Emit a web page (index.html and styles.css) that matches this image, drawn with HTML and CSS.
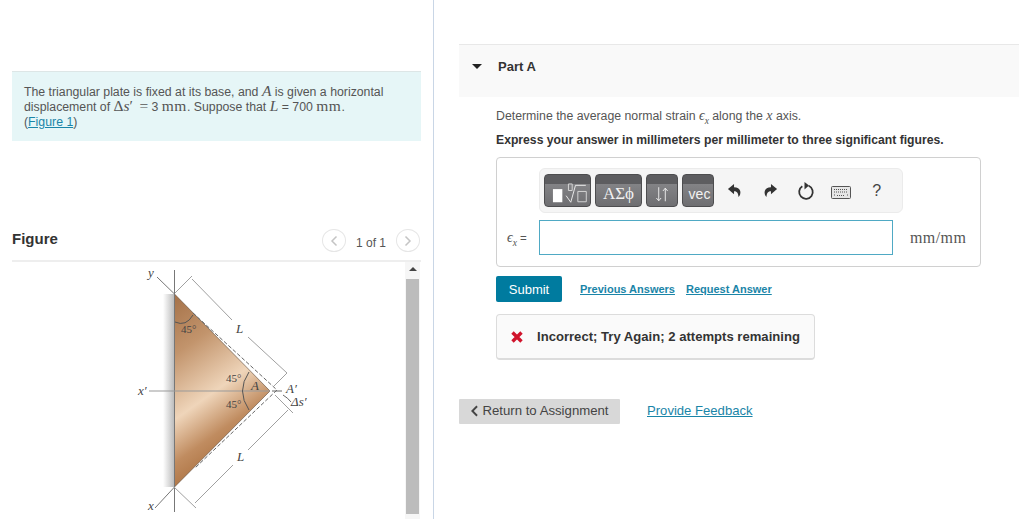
FILE: index.html
```html
<!DOCTYPE html>
<html lang="en">
<head>
<meta charset="utf-8">
<title>Part A</title>
<link rel="stylesheet" href="styles.css">
</head>
<body>
<main class="page">
  <section class="left">
    <div class="intro">The triangular plate is fixed at its base, and <span class="mi big">A</span> is given a horizontal<br>displacement of <span class="mn big">Δ</span><span class="mi big">s</span><span class="mn big">′</span> <span class="mn big eq">=</span> 3 <span class="mn big unit">mm</span>. Suppose that <span class="mi big">L</span> = 700 <span class="mn big unit">mm</span>.<br>(<a href="#" class="link">Figure 1</a>)</div>
    <header class="fig-head">
      <h2 class="fig-title">Figure</h2>
      <div class="pager">
        <span class="pager-btn"><svg class="chev" viewBox="0 0 10 12"><path d="M7.500 1.500 3 6l4.500 4.500"/></svg></span>
        <span class="pager-text">1 of 1</span>
        <span class="pager-btn"><svg class="chev" viewBox="0 0 10 12"><path d="M2.500 1.500 7 6l-4.500 4.500"/></svg></span>
      </div>
    </header>
    <div class="fig-body">
      <svg class="diagram" viewBox="12 262 393 257">
        <defs>
          <linearGradient id="plate" x1="0.1" y1="0" x2="0.45" y2="1">
            <stop offset="0" stop-color="#a8754c"/>
            <stop offset="0.25" stop-color="#c2946c"/>
            <stop offset="0.55" stop-color="#efd5ba"/>
            <stop offset="0.75" stop-color="#c08c60"/>
            <stop offset="1" stop-color="#a0622f"/>
          </linearGradient>
          <linearGradient id="wall" x1="0" y1="0" x2="1" y2="0">
            <stop offset="0" stop-color="#fff"/>
            <stop offset="1" stop-color="#bcbcbc"/>
          </linearGradient>
        </defs>
        <rect x="163" y="294" width="11" height="193" fill="url(#wall)"/>
        <path d="M174.500 294 270 391 174.500 487z" fill="url(#plate)" stroke="#5b4636" stroke-width=".6"/>
        <g fill="none" stroke-width="1">
          <path d="M174.500 270V512" stroke="#777"/>
          <path d="M157 277 174.500 294M155 508 174.500 487" stroke="#777"/>
          <path d="M149 391H270" stroke="#999"/>
          <path d="M175 293 192 276M192 279 232 320M248 337 287 373M287 373 274 386" stroke="#a0a0a0"/>
          <path d="M174 487 196 508M195 503 233 465M248 450 288 410M275 395 293 413" stroke="#a0a0a0"/>
          <path d="M193 313 277 390 195 468" stroke="#666" stroke-dasharray="4 2"/>
          <path d="M175 322Q186 327 193 315M249 372Q236 391 249 410" stroke="#555"/>
          <path d="M272 391H282M283 395Q288 398 291 402" stroke="#666"/>
        </g>
        <g class="fig-label">
          <text x="148" y="277">y</text>
          <text x="138" y="395">x′</text>
          <text x="148" y="510">x</text>
          <text x="236" y="333">L</text>
          <text x="237" y="461">L</text>
          <text x="251" y="390">A</text>
          <text x="286" y="393">A′</text>
          <text x="291" y="406">Δs′</text>
        </g>
        <g class="fig-num">
          <text x="181" y="333">45°</text>
          <text x="226" y="382">45°</text>
          <text x="226" y="408">45°</text>
        </g>
      </svg>
      <div class="scrollbar">
        <span class="scroll-up"></span>
        <span class="scroll-thumb"></span>
      </div>
    </div>
  </section>

  <section class="right">
    <header class="part-head">
      <span class="caret"></span>
      <h3 class="part-title">Part A</h3>
    </header>
    <div class="part-body">
      <p class="prompt">Determine the average normal strain <span class="mi mth">ϵ<sub>x</sub></span> along the <span class="mi mth">x</span> axis.</p>
      <p class="instr">Express your answer in millimeters per millimeter to three significant figures.</p>
      <div class="answer">
        <div class="toolbar">
          <span class="tool tool-a">
            <svg class="tool-svg" viewBox="0 0 47 33"><rect x="8" y="15" width="10" height="14" fill="#fff"/><path d="M24.500 9.500h4v7h-4zM34.500 17.500h9v11h-9z" fill="none" stroke="#d8d8d8"/><path d="M22 22l5 7 5-18h11" fill="none" stroke="#eee"/></svg>
          </span>
          <span class="tool tool-b">ΑΣϕ</span>
          <span class="tool tool-c">
            <svg class="tool-svg" viewBox="0 0 32 33"><path d="M12.500 13v14M10 24.500l2.500 3 2.500-3M19.500 28V14M17 17l2.500-3 2.500 3" fill="none" stroke="#eee"/></svg>
          </span>
          <span class="tool tool-d">vec</span>
          <span class="icons">
            <svg class="icon" viewBox="0 0 16 16"><path d="M7.500 1 1 6.500l6.500 5.500V8.800c3 0 4.400 1.500 4.800 6.200 1.700-2 2.400-4.200 1.800-6.500C13.500 6 11 4.500 7.500 4.400z" fill="#333"/></svg>
            <svg class="icon" viewBox="0 0 16 16"><path d="M8.500 1 15 6.500 8.500 12V8.800c-3 0-4.400 1.500-4.800 6.200C2 13 1.300 10.800 1.900 8.500 2.500 6 5 4.500 8.500 4.400z" fill="#333"/></svg>
            <svg class="icon icon-reload" viewBox="0 0 18 18"><path d="M5.300 4.300a6.800 6.800 0 1 0 6.400-.5" fill="none" stroke="#333" stroke-width="1.800"/><path d="M7.500 0v7.500L12 3.500z" fill="#333"/></svg>
            <svg class="icon icon-key" viewBox="0 0 20 13"><rect x=".5" y=".5" width="19" height="12" rx="1" fill="#e6e6e6" stroke="#555"/><path d="M3 3.500h14M3 6h14M3 9h1M6 9.500h8M16 9h1" stroke="#555" stroke-dasharray="1 1"/></svg>
            <span class="help">?</span>
          </span>
        </div>
        <div class="eq-row">
          <span class="eq-label"><span class="mi mth">ϵ<sub>x</sub></span> =</span>
          <input class="eq-input" type="text" aria-label="answer">
          <span class="eq-unit">mm/mm</span>
        </div>
      </div>
      <div class="actions">
        <button class="submit" type="button">Submit</button>
        <a href="#" class="link small">Previous Answers</a>
        <a href="#" class="link small">Request Answer</a>
      </div>
      <div class="feedback">
        <svg class="cross" viewBox="0 0 14 14"><path d="M2.500 2.500 11.500 11.500M11.500 2.500 2.500 11.500" stroke="#d0142c" stroke-width="3.400"/></svg>
        <span>Incorrect; Try Again; 2 attempts remaining</span>
      </div>
    </div>
    <footer class="foot">
      <button class="return" type="button"><svg class="ret-chev" viewBox="0 0 10 14"><path d="M8 1.500 2.500 7 8 12.500" /></svg>Return to Assignment</button>
      <a href="#" class="link feedback-link">Provide Feedback</a>
    </footer>
  </section>
</main>
</body>
</html>
```
FILE: styles.css
```css
* { box-sizing: border-box; }
html, body { margin: 0; height: 100%; overflow: hidden; background: #fff; }
body { font-family: "Liberation Sans", Arial, sans-serif; color: #333; }
.page { display: flex; width: 1019px; height: 519px; }

.mi { font-family: "Liberation Serif", serif; font-style: italic; }
.mn { font-family: "Liberation Serif", serif; }
.big { font-size: 15.500px; line-height: 0; }
.unit { letter-spacing: .5px; }
.eq { margin-left: 3px; }
.mth { font-size: 14px; line-height: 0; }
.mi sub { font-size: 9.500px; line-height: 0; }
.link { color: #1a85a8; text-decoration: underline; }

.left { width: 434px; height: 519px; flex: none; padding: 71px 12px 0; border-right: 1px solid #c9d6e6; display: flex; flex-direction: column; }
.intro { width: 409px; height: 70px; padding: 13px 12px 0; background: #e6f6f7; border-top: 1px solid #dde6e6; font-size: 12.300px; line-height: 15px; color: #555; white-space: nowrap; }
.fig-head { width: 409px; height: 51px; margin-top: 70px; padding: 20px 1px 0 0; display: flex; justify-content: space-between; align-items: flex-start; border-bottom: 2px solid #eee; }
.fig-title { margin: 0; font-size: 15px; line-height: 16px; font-weight: bold; color: #333; }
.pager { display: flex; align-items: center; gap: 10px; margin-top: -2px; }
.pager-btn { width: 24px; height: 23px; border: 1px solid #e6e6e6; border-radius: 50%; display: flex; align-items: center; justify-content: center; }
.chev { width: 10px; height: 12px; fill: none; stroke: #c4c4c4; stroke-width: 1.500; }
.pager-text { font-size: 12px; color: #555; padding-top: 4px; }
.fig-body { display: flex; width: 409px; flex: 1; min-height: 0; }
.diagram { width: 393px; height: 257px; flex: none; }
.fig-label text { font-family: "Liberation Serif", serif; font-style: italic; font-size: 13px; fill: #444; }
.fig-num text { font-family: "Liberation Serif", serif; font-size: 11px; fill: #444; }
.scrollbar { width: 15px; display: flex; flex-direction: column; align-items: center; background: #f6f6f6; }
.scroll-up { margin-top: 5px; width: 0; height: 0; border-left: 4px solid transparent; border-right: 4px solid transparent; border-bottom: 4px solid #444; }
.scroll-thumb { width: 13px; height: 235px; margin-top: 8px; background: #bcbcbc; }

.right { flex: 1; min-width: 0; padding: 44px 0 0 25px; display: flex; flex-direction: column; }
.part-head { height: 53px; background: #f9f9f9; border-top: 1px solid #e8e8e8; display: flex; align-items: flex-start; padding: 14px 0 0 13px; }
.caret { width: 0; height: 0; margin-top: 5px; border-left: 5px solid transparent; border-right: 5px solid transparent; border-top: 5px solid #222; }
.part-title { margin: 0 0 0 16px; font-size: 13px; line-height: 16px; font-weight: bold; color: #333; }
.part-body { padding-left: 37px; }
.prompt { margin: 11px 0 0; font-size: 12.300px; line-height: 16px; color: #555; }
.instr { margin: 8px 0 0; font-size: 12.200px; line-height: 16px; font-weight: bold; color: #333; }
.answer { width: 485px; height: 110px; margin-top: 9px; padding: 10px 0 0 42px; border: 1px solid #d0d0d0; border-radius: 4px; }
.toolbar { width: 364px; height: 45px; padding: 5px 4px; display: flex; gap: 4px; background: #f5f5f5; border: 1px solid #ebebeb; border-radius: 6px; }
.tool { height: 33px; padding-top: 10px; border-radius: 4px; border: 1px solid #4d4d4f; color: #f2f2f2; text-align: center; background: linear-gradient(#5d5d60 0 9px, #838386 9px, #6e6e71 100%); }
.tool-a { width: 47px; padding: 0; }
.tool-b { width: 47px; font-family: "Liberation Serif", serif; font-size: 17px; line-height: 18px; white-space: nowrap; }
.tool-c { width: 32px; padding: 0; }
.tool-d { width: 32px; padding-left: 3px; font-size: 14px; line-height: 18px; }
.tool-svg { width: 100%; height: 100%; display: block; }
.icons { display: grid; grid-template-columns: repeat(5, 35.500px); justify-items: center; align-items: center; margin-left: -1px; height: 33px; }
.icon { width: 15px; height: 15px; }
.icon-reload { width: 18px; height: 18px; }
.icon-key { width: 20px; height: 13px; margin-top: 3px; }
.help { font-size: 16px; color: #444; }
.eq-row { display: flex; align-items: center; margin: 7px 0 0 -32px; }
.eq-label { width: 32px; font-size: 11.500px; color: #555; white-space: nowrap; }
.eq-input { width: 354px; height: 35px; border: 1px solid #4fa9c4; background: #fff; outline: none; flex: none; }
.eq-unit { margin: 1px 0 0 17px; font-family: "Liberation Serif", serif; font-size: 16px; letter-spacing: .4px; color: #555; }
.actions { display: flex; align-items: center; margin-top: 9px; }
.submit { width: 66px; height: 26px; padding: 0; border: 0; border-radius: 2px; background: #007b9f; color: #fff; font: 13px "Liberation Sans", sans-serif; }
.small { font-size: 11px; font-weight: bold; }
.actions .small { margin-left: 11px; }
.actions .small:first-of-type { margin-left: 18px; }
.feedback { width: 319px; height: 46px; margin-top: 12px; padding-left: 13px; display: flex; align-items: center; gap: 13px; background: #fafafa; border: 1px solid #dcdcdc; border-bottom-width: 2px; border-radius: 4px; font-size: 13.100px; font-weight: bold; color: #333; white-space: nowrap; }
.cross { width: 14px; height: 14px; flex: none; }
.foot { display: flex; align-items: center; margin-top: 39px; gap: 27px; }
.return { width: 161px; height: 25px; padding: 0 0 2px; display: flex; align-items: center; justify-content: center; gap: 3px; border: 0; border-radius: 1px; background: #d8d8d8; color: #444; font: 13.200px "Liberation Sans", sans-serif; }
.ret-chev { width: 9px; height: 12px; fill: none; stroke: #444; stroke-width: 2.200; }
.feedback-link { font-size: 13.100px; margin-bottom: 2px; }
```
